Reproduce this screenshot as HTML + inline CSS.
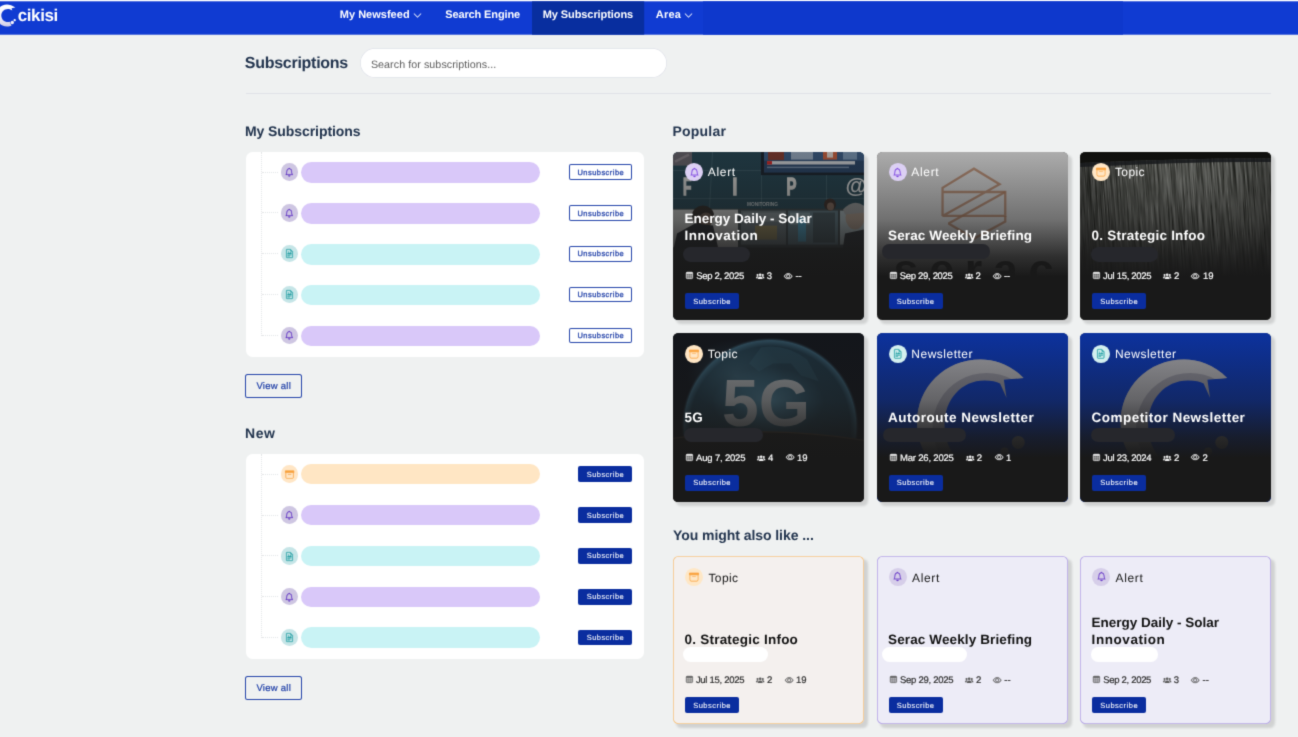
<!DOCTYPE html>
<html lang="en"><head><meta charset="utf-8"><title>Subscriptions</title><style>
*{box-sizing:border-box;margin:0;padding:0}
html,body{width:1298px;height:737px;overflow:hidden;background:#eff1f1}
body{font-family:"Liberation Sans",sans-serif;position:relative}
#wrap{position:absolute;left:-12px;top:-12px;width:1322px;height:761px;background:#eff1f1;filter:url(#soft)}
#root{position:absolute;left:12px;top:12px;width:1298px;height:737px;background:#eff1f1}
.b{position:absolute}
.i{position:absolute;display:block;overflow:visible}
.t{position:absolute;white-space:pre;line-height:1;font-family:"Liberation Sans",sans-serif;text-rendering:geometricPrecision}
.card{border-radius:5.500px;overflow:hidden;background:#191919;box-shadow:3.600px 3.600px 2.400px rgba(0,0,0,.135)}
.card .i{overflow:hidden}
</style></head><body><svg width="0" height="0" style="position:absolute"><defs><filter id="soft" x="0" y="0" width="100%" height="100%" color-interpolation-filters="sRGB"><feConvolveMatrix order="3" kernelMatrix="0.01960 0.10080 0.01960 0.10080 0.51840 0.10080 0.01960 0.10080 0.01960" divisor="1" edgeMode="duplicate" preserveAlpha="true"/></filter></defs></svg><div id="wrap"><div id="root"><svg class="i" style="left:-12px;top:-12px" width="1322" height="52" viewBox="-12 -12 1322 52"><rect x="-12" y="-12" width="1322" height="14" fill="#fff"/><rect x="-12" y="1.300" width="1322" height="33.400" fill="#103bd2"/><rect x="703" y="1.300" width="420" height="33.400" fill="#0e38cc"/><rect x="532" y="1.300" width="112.200" height="33.400" fill="#082e9f"/></svg>
<svg class="i" style="left:0;top:0;width:60px;height:36px" viewBox="0 0 60 36">
<defs><linearGradient id="lg" x1="0" y1="0" x2="0" y2="1"><stop offset="0" stop-color="#ffffff"/><stop offset="0.55" stop-color="#f4f3fb"/><stop offset="1" stop-color="#cfcde6"/></linearGradient></defs>
<path fill="url(#lg)" d="M15.300 7.600 C12.500 5.300 9.500 4.500 7 4.500 C0.500 4.500 -4 9.500 -4 15.500 C-4 21.600 1 26.600 7 26.600 C9 26.600 10.400 26.200 11.600 25.200 C10.600 24 10.200 22.900 10.100 21.800 C9.200 22 8.400 22 7.800 22 C4.200 22 1.300 19.100 1.300 15.400 C1.300 11.800 4.200 8.900 7.800 8.900 C9.200 8.900 10.600 9.300 11.600 10 L12.300 10.800 L11.600 8.300 Z"/>
<circle cx="12.300" cy="22.500" r="1.700" fill="#f2f1fa"/><circle cx="14.700" cy="20.200" r="1.150" fill="#fff"/>
</svg>
<span class="t" style="left:17.70px;top:7.00px;font-size:17px;font-weight:700;color:#fff;letter-spacing:-0.387px;">cikisi</span>
<span class="t" style="left:339.79px;top:10.00px;font-size:11px;font-weight:700;color:#fff;letter-spacing:0.013px;">My Newsfeed</span>
<svg class="i" viewBox="0 0 16 16" style="left:412.70px;top:10.50px;width:9.00px;height:9.00px;fill:#fff;stroke:#fff;stroke-width:0.35"><path fill-rule="evenodd" d="M1.646 4.646a.5.5 0 0 1 .708 0L8 10.293l5.646-5.647a.5.5 0 0 1 .708.708l-6 6a.5.5 0 0 1-.708 0l-6-6a.5.5 0 0 1 0-.708z"/></svg>
<span class="t" style="left:445.19px;top:10.00px;font-size:11px;font-weight:700;color:#fff;letter-spacing:-0.116px;">Search Engine</span>
<span class="t" style="left:542.68px;top:10.00px;font-size:11px;font-weight:700;color:#fff;letter-spacing:-0.077px;">My Subscriptions</span>
<span class="t" style="left:655.78px;top:10.00px;font-size:11px;font-weight:700;color:#fff;letter-spacing:0.220px;">Area</span>
<svg class="i" viewBox="0 0 16 16" style="left:684.00px;top:10.50px;width:9.00px;height:9.00px;fill:#fff;stroke:#fff;stroke-width:0.35"><path fill-rule="evenodd" d="M1.646 4.646a.5.5 0 0 1 .708 0L8 10.293l5.646-5.647a.5.5 0 0 1 .708.708l-6 6a.5.5 0 0 1-.708 0l-6-6a.5.5 0 0 1 0-.708z"/></svg>
<span class="t" style="left:244.76px;top:56.00px;font-size:16px;font-weight:700;color:#22344e;letter-spacing:-0.267px;">Subscriptions</span>
<div class="b" style="left:360.00px;top:48.40px;width:306.80px;height:30.10px;background:#fff;border-radius:15.100px;box-shadow:inset 0 0 0 0.700px #dcdfe6"></div>
<span class="t" style="left:370.90px;top:60.00px;font-size:10.7px;font-weight:400;color:#5c5c5c;letter-spacing:0.070px;">Search for subscriptions...</span>
<div class="b" style="left:245.50px;top:93.00px;width:1025.60px;height:0.90px;background:#e0e2e7"></div>
<span class="t" style="left:244.89px;top:124.00px;font-size:14px;font-weight:700;color:#22344e;letter-spacing:-0.065px;">My Subscriptions</span>
<span class="t" style="left:244.89px;top:426.00px;font-size:14px;font-weight:700;color:#22344e;letter-spacing:0.662px;">New</span>
<span class="t" style="left:672.59px;top:124.00px;font-size:14px;font-weight:700;color:#22344e;letter-spacing:0.199px;">Popular</span>
<span class="t" style="left:672.99px;top:528.00px;font-size:14px;font-weight:700;color:#22344e;letter-spacing:-0.059px;">You might also like ...</span>
<div class="b" style="left:245.50px;top:151.60px;width:398.50px;height:205.00px;background:#fff;border-radius:6.500px"></div><div class="b" style="left:261.20px;top:151.60px;width:0.00px;height:184.00px;border-left:1px dotted #e3e5e7"></div><div class="b" style="left:261.60px;top:171.50px;width:16.40px;height:0.00px;border-top:1px dotted #e3e5e7"></div><div class="b" style="left:280.60px;top:163.30px;width:17.40px;height:17.40px;background:#cec6e2;border-radius:50%"></div><svg class="i" viewBox="0 0 16 16" style="left:285.05px;top:167.85px;width:8.50px;height:8.50px;fill:#5a2cc2;stroke:#5a2cc2;stroke-width:0.45"><path d="M8 16a2 2 0 0 0 2-2H6a2 2 0 0 0 2 2zM8 1.918l-.797.161A4.002 4.002 0 0 0 4 6c0 .628-.134 2.197-.459 3.742-.16.767-.376 1.566-.663 2.258h10.244c-.287-.692-.502-1.490-.663-2.258C12.134 8.197 12 6.628 12 6a4.002 4.002 0 0 0-3.203-3.920L8 1.917zM14.220 12c.223.447.481.801.78 1H1c.299-.199.557-.553.78-1C2.680 10.200 3 6.880 3 6c0-2.420 1.720-4.440 4.005-4.901a1 1 0 1 1 1.990 0A5.002 5.002 0 0 1 13 6c0 .880.320 4.200 1.220 6z"/></svg><div class="b" style="left:300.70px;top:162.00px;width:239.40px;height:20.80px;background:#d9c8f9;border-radius:10.400px"></div><div class="b" style="left:569.00px;top:164.10px;width:63.20px;height:15.70px;box-shadow:inset 0 0 0 1px #2545aa;border-radius:2px;background:#fff"></div><span class="t" style="left:577.51px;top:169.00px;font-size:7.5px;font-weight:400;color:#1c3ca6;letter-spacing:0.449px;-webkit-text-stroke:0.250px #1c3ca6;">Unsubscribe</span><div class="b" style="left:261.60px;top:212.40px;width:16.40px;height:0.00px;border-top:1px dotted #e3e5e7"></div><div class="b" style="left:280.60px;top:204.20px;width:17.40px;height:17.40px;background:#cec6e2;border-radius:50%"></div><svg class="i" viewBox="0 0 16 16" style="left:285.05px;top:208.75px;width:8.50px;height:8.50px;fill:#5a2cc2;stroke:#5a2cc2;stroke-width:0.45"><path d="M8 16a2 2 0 0 0 2-2H6a2 2 0 0 0 2 2zM8 1.918l-.797.161A4.002 4.002 0 0 0 4 6c0 .628-.134 2.197-.459 3.742-.16.767-.376 1.566-.663 2.258h10.244c-.287-.692-.502-1.490-.663-2.258C12.134 8.197 12 6.628 12 6a4.002 4.002 0 0 0-3.203-3.920L8 1.917zM14.220 12c.223.447.481.801.78 1H1c.299-.199.557-.553.78-1C2.680 10.200 3 6.880 3 6c0-2.420 1.720-4.440 4.005-4.901a1 1 0 1 1 1.990 0A5.002 5.002 0 0 1 13 6c0 .880.320 4.200 1.220 6z"/></svg><div class="b" style="left:300.70px;top:202.90px;width:239.40px;height:20.80px;background:#d9c8f9;border-radius:10.400px"></div><div class="b" style="left:569.00px;top:205.00px;width:63.20px;height:15.70px;box-shadow:inset 0 0 0 1px #2545aa;border-radius:2px;background:#fff"></div><span class="t" style="left:577.51px;top:210.00px;font-size:7.5px;font-weight:400;color:#1c3ca6;letter-spacing:0.449px;-webkit-text-stroke:0.250px #1c3ca6;">Unsubscribe</span><div class="b" style="left:261.60px;top:253.30px;width:16.40px;height:0.00px;border-top:1px dotted #e3e5e7"></div><div class="b" style="left:280.60px;top:245.10px;width:17.40px;height:17.40px;background:#c6e5e7;border-radius:50%"></div><svg class="i" viewBox="0 0 16 16" style="left:284.80px;top:249.40px;width:9.00px;height:9.00px;fill:#2aa1a6;stroke:#2aa1a6;stroke-width:0.45"><path d="M14 4.500V14a2 2 0 0 1-2 2H4a2 2 0 0 1-2-2V2a2 2 0 0 1 2-2h5.500L14 4.500zm-3 0A1.500 1.500 0 0 1 9.500 3V1H4a1 1 0 0 0-1 1v12a1 1 0 0 0 1 1h8a1 1 0 0 0 1-1V4.500h-2z"/><path d="M4.500 12.500A.5.500 0 0 1 5 12h3a.5.500 0 0 1 0 1H5a.5.500 0 0 1-.5-.5zm0-2A.5.500 0 0 1 5 10h6a.5.500 0 0 1 0 1H5a.5.500 0 0 1-.5-.5zm1.639-3.708 1.330.886 1.854-1.855a.25.250 0 0 1 .289-.047l1.888.974V8.500a.5.500 0 0 1-.5.500H5a.5.500 0 0 1-.5-.5V8s1.540-1.274 1.639-1.208zM6.250 6a.75.750 0 1 0 0-1.500.75.750 0 0 0 0 1.500z"/></svg><div class="b" style="left:300.70px;top:243.80px;width:239.40px;height:20.80px;background:#c9f3f5;border-radius:10.400px"></div><div class="b" style="left:569.00px;top:245.90px;width:63.20px;height:15.70px;box-shadow:inset 0 0 0 1px #2545aa;border-radius:2px;background:#fff"></div><span class="t" style="left:577.51px;top:250.00px;font-size:7.5px;font-weight:400;color:#1c3ca6;letter-spacing:0.449px;-webkit-text-stroke:0.250px #1c3ca6;">Unsubscribe</span><div class="b" style="left:261.60px;top:294.20px;width:16.40px;height:0.00px;border-top:1px dotted #e3e5e7"></div><div class="b" style="left:280.60px;top:286.00px;width:17.40px;height:17.40px;background:#c6e5e7;border-radius:50%"></div><svg class="i" viewBox="0 0 16 16" style="left:284.80px;top:290.30px;width:9.00px;height:9.00px;fill:#2aa1a6;stroke:#2aa1a6;stroke-width:0.45"><path d="M14 4.500V14a2 2 0 0 1-2 2H4a2 2 0 0 1-2-2V2a2 2 0 0 1 2-2h5.500L14 4.500zm-3 0A1.500 1.500 0 0 1 9.500 3V1H4a1 1 0 0 0-1 1v12a1 1 0 0 0 1 1h8a1 1 0 0 0 1-1V4.500h-2z"/><path d="M4.500 12.500A.5.500 0 0 1 5 12h3a.5.500 0 0 1 0 1H5a.5.500 0 0 1-.5-.5zm0-2A.5.500 0 0 1 5 10h6a.5.500 0 0 1 0 1H5a.5.500 0 0 1-.5-.5zm1.639-3.708 1.330.886 1.854-1.855a.25.250 0 0 1 .289-.047l1.888.974V8.500a.5.500 0 0 1-.5.500H5a.5.500 0 0 1-.5-.5V8s1.540-1.274 1.639-1.208zM6.250 6a.75.750 0 1 0 0-1.500.75.750 0 0 0 0 1.500z"/></svg><div class="b" style="left:300.70px;top:284.70px;width:239.40px;height:20.80px;background:#c9f3f5;border-radius:10.400px"></div><div class="b" style="left:569.00px;top:286.80px;width:63.20px;height:15.70px;box-shadow:inset 0 0 0 1px #2545aa;border-radius:2px;background:#fff"></div><span class="t" style="left:577.51px;top:291.00px;font-size:7.5px;font-weight:400;color:#1c3ca6;letter-spacing:0.449px;-webkit-text-stroke:0.250px #1c3ca6;">Unsubscribe</span><div class="b" style="left:261.60px;top:335.10px;width:16.40px;height:0.00px;border-top:1px dotted #e3e5e7"></div><div class="b" style="left:280.60px;top:326.90px;width:17.40px;height:17.40px;background:#cec6e2;border-radius:50%"></div><svg class="i" viewBox="0 0 16 16" style="left:285.05px;top:331.45px;width:8.50px;height:8.50px;fill:#5a2cc2;stroke:#5a2cc2;stroke-width:0.45"><path d="M8 16a2 2 0 0 0 2-2H6a2 2 0 0 0 2 2zM8 1.918l-.797.161A4.002 4.002 0 0 0 4 6c0 .628-.134 2.197-.459 3.742-.16.767-.376 1.566-.663 2.258h10.244c-.287-.692-.502-1.490-.663-2.258C12.134 8.197 12 6.628 12 6a4.002 4.002 0 0 0-3.203-3.920L8 1.917zM14.220 12c.223.447.481.801.78 1H1c.299-.199.557-.553.78-1C2.680 10.200 3 6.880 3 6c0-2.420 1.720-4.440 4.005-4.901a1 1 0 1 1 1.990 0A5.002 5.002 0 0 1 13 6c0 .880.320 4.200 1.220 6z"/></svg><div class="b" style="left:300.70px;top:325.60px;width:239.40px;height:20.80px;background:#d9c8f9;border-radius:10.400px"></div><div class="b" style="left:569.00px;top:327.70px;width:63.20px;height:15.70px;box-shadow:inset 0 0 0 1px #2545aa;border-radius:2px;background:#fff"></div><span class="t" style="left:577.51px;top:332.00px;font-size:7.5px;font-weight:400;color:#1c3ca6;letter-spacing:0.449px;-webkit-text-stroke:0.250px #1c3ca6;">Unsubscribe</span>
<div class="b" style="left:245.50px;top:453.70px;width:398.50px;height:205.00px;background:#fff;border-radius:6.500px"></div><div class="b" style="left:261.20px;top:453.70px;width:0.00px;height:184.00px;border-left:1px dotted #e3e5e7"></div><div class="b" style="left:261.60px;top:473.60px;width:16.40px;height:0.00px;border-top:1px dotted #e3e5e7"></div><div class="b" style="left:280.60px;top:465.40px;width:17.40px;height:17.40px;background:#ffe6c6;border-radius:50%"></div><svg class="i" viewBox="0 0 16 16" style="left:284.70px;top:469.60px;width:9.20px;height:9.20px;fill:#f9a33e;stroke:#f9a33e;stroke-width:0.25"><rect x="0.500" y="1.500" width="15" height="3" stroke="none"/><path d="M0 2a1 1 0 0 1 1-1h14a1 1 0 0 1 1 1v2a1 1 0 0 1-1 1v7.500a2.500 2.500 0 0 1-2.500 2.500h-9A2.500 2.500 0 0 1 1 12.500V5a1 1 0 0 1-1-1V2zm2 3v7.500A1.500 1.500 0 0 0 3.500 14h9a1.500 1.500 0 0 0 1.500-1.500V5H2zm13-3H1v2h14V2zM5 7.500a.5.500 0 0 1 .5-.5h5a.5.500 0 0 1 0 1h-5a.5.500 0 0 1-.5-.5z"/></svg><div class="b" style="left:300.70px;top:463.80px;width:239.40px;height:20.50px;background:#ffe6c4;border-radius:10.400px"></div><div class="b" style="left:578.20px;top:466.20px;width:54.00px;height:15.70px;background:#0a2d9f;border-radius:2px"></div><span class="t" style="left:586.71px;top:471.00px;font-size:7.5px;font-weight:400;color:#fff;letter-spacing:0.452px;-webkit-text-stroke:0.080px #fff;">Subscribe</span><div class="b" style="left:261.60px;top:514.50px;width:16.40px;height:0.00px;border-top:1px dotted #e3e5e7"></div><div class="b" style="left:280.60px;top:506.30px;width:17.40px;height:17.40px;background:#cec6e2;border-radius:50%"></div><svg class="i" viewBox="0 0 16 16" style="left:285.05px;top:510.85px;width:8.50px;height:8.50px;fill:#5a2cc2;stroke:#5a2cc2;stroke-width:0.45"><path d="M8 16a2 2 0 0 0 2-2H6a2 2 0 0 0 2 2zM8 1.918l-.797.161A4.002 4.002 0 0 0 4 6c0 .628-.134 2.197-.459 3.742-.16.767-.376 1.566-.663 2.258h10.244c-.287-.692-.502-1.490-.663-2.258C12.134 8.197 12 6.628 12 6a4.002 4.002 0 0 0-3.203-3.920L8 1.917zM14.220 12c.223.447.481.801.78 1H1c.299-.199.557-.553.78-1C2.680 10.200 3 6.880 3 6c0-2.420 1.720-4.440 4.005-4.901a1 1 0 1 1 1.990 0A5.002 5.002 0 0 1 13 6c0 .880.320 4.200 1.220 6z"/></svg><div class="b" style="left:300.70px;top:504.70px;width:239.40px;height:20.50px;background:#d9c8f9;border-radius:10.400px"></div><div class="b" style="left:578.20px;top:507.10px;width:54.00px;height:15.70px;background:#0a2d9f;border-radius:2px"></div><span class="t" style="left:586.71px;top:512.00px;font-size:7.5px;font-weight:400;color:#fff;letter-spacing:0.452px;-webkit-text-stroke:0.080px #fff;">Subscribe</span><div class="b" style="left:261.60px;top:555.40px;width:16.40px;height:0.00px;border-top:1px dotted #e3e5e7"></div><div class="b" style="left:280.60px;top:547.20px;width:17.40px;height:17.40px;background:#c6e5e7;border-radius:50%"></div><svg class="i" viewBox="0 0 16 16" style="left:284.80px;top:551.50px;width:9.00px;height:9.00px;fill:#2aa1a6;stroke:#2aa1a6;stroke-width:0.45"><path d="M14 4.500V14a2 2 0 0 1-2 2H4a2 2 0 0 1-2-2V2a2 2 0 0 1 2-2h5.500L14 4.500zm-3 0A1.500 1.500 0 0 1 9.500 3V1H4a1 1 0 0 0-1 1v12a1 1 0 0 0 1 1h8a1 1 0 0 0 1-1V4.500h-2z"/><path d="M4.500 12.500A.5.500 0 0 1 5 12h3a.5.500 0 0 1 0 1H5a.5.500 0 0 1-.5-.5zm0-2A.5.500 0 0 1 5 10h6a.5.500 0 0 1 0 1H5a.5.500 0 0 1-.5-.5zm1.639-3.708 1.330.886 1.854-1.855a.25.250 0 0 1 .289-.047l1.888.974V8.500a.5.500 0 0 1-.5.500H5a.5.500 0 0 1-.5-.5V8s1.540-1.274 1.639-1.208zM6.250 6a.75.750 0 1 0 0-1.500.75.750 0 0 0 0 1.500z"/></svg><div class="b" style="left:300.70px;top:545.60px;width:239.40px;height:20.50px;background:#c9f3f5;border-radius:10.400px"></div><div class="b" style="left:578.20px;top:548.00px;width:54.00px;height:15.70px;background:#0a2d9f;border-radius:2px"></div><span class="t" style="left:586.71px;top:552.00px;font-size:7.5px;font-weight:400;color:#fff;letter-spacing:0.452px;-webkit-text-stroke:0.080px #fff;">Subscribe</span><div class="b" style="left:261.60px;top:596.30px;width:16.40px;height:0.00px;border-top:1px dotted #e3e5e7"></div><div class="b" style="left:280.60px;top:588.10px;width:17.40px;height:17.40px;background:#cec6e2;border-radius:50%"></div><svg class="i" viewBox="0 0 16 16" style="left:285.05px;top:592.65px;width:8.50px;height:8.50px;fill:#5a2cc2;stroke:#5a2cc2;stroke-width:0.45"><path d="M8 16a2 2 0 0 0 2-2H6a2 2 0 0 0 2 2zM8 1.918l-.797.161A4.002 4.002 0 0 0 4 6c0 .628-.134 2.197-.459 3.742-.16.767-.376 1.566-.663 2.258h10.244c-.287-.692-.502-1.490-.663-2.258C12.134 8.197 12 6.628 12 6a4.002 4.002 0 0 0-3.203-3.920L8 1.917zM14.220 12c.223.447.481.801.78 1H1c.299-.199.557-.553.78-1C2.680 10.200 3 6.880 3 6c0-2.420 1.720-4.440 4.005-4.901a1 1 0 1 1 1.990 0A5.002 5.002 0 0 1 13 6c0 .880.320 4.200 1.220 6z"/></svg><div class="b" style="left:300.70px;top:586.50px;width:239.40px;height:20.50px;background:#d9c8f9;border-radius:10.400px"></div><div class="b" style="left:578.20px;top:588.90px;width:54.00px;height:15.70px;background:#0a2d9f;border-radius:2px"></div><span class="t" style="left:586.71px;top:593.00px;font-size:7.5px;font-weight:400;color:#fff;letter-spacing:0.452px;-webkit-text-stroke:0.080px #fff;">Subscribe</span><div class="b" style="left:261.60px;top:637.20px;width:16.40px;height:0.00px;border-top:1px dotted #e3e5e7"></div><div class="b" style="left:280.60px;top:629.00px;width:17.40px;height:17.40px;background:#c6e5e7;border-radius:50%"></div><svg class="i" viewBox="0 0 16 16" style="left:284.80px;top:633.30px;width:9.00px;height:9.00px;fill:#2aa1a6;stroke:#2aa1a6;stroke-width:0.45"><path d="M14 4.500V14a2 2 0 0 1-2 2H4a2 2 0 0 1-2-2V2a2 2 0 0 1 2-2h5.500L14 4.500zm-3 0A1.500 1.500 0 0 1 9.500 3V1H4a1 1 0 0 0-1 1v12a1 1 0 0 0 1 1h8a1 1 0 0 0 1-1V4.500h-2z"/><path d="M4.500 12.500A.5.500 0 0 1 5 12h3a.5.500 0 0 1 0 1H5a.5.500 0 0 1-.5-.5zm0-2A.5.500 0 0 1 5 10h6a.5.500 0 0 1 0 1H5a.5.500 0 0 1-.5-.5zm1.639-3.708 1.330.886 1.854-1.855a.25.250 0 0 1 .289-.047l1.888.974V8.500a.5.500 0 0 1-.5.500H5a.5.500 0 0 1-.5-.5V8s1.540-1.274 1.639-1.208zM6.250 6a.75.750 0 1 0 0-1.500.75.750 0 0 0 0 1.500z"/></svg><div class="b" style="left:300.70px;top:627.40px;width:239.40px;height:20.50px;background:#c9f3f5;border-radius:10.400px"></div><div class="b" style="left:578.20px;top:629.80px;width:54.00px;height:15.70px;background:#0a2d9f;border-radius:2px"></div><span class="t" style="left:586.71px;top:634.00px;font-size:7.5px;font-weight:400;color:#fff;letter-spacing:0.452px;-webkit-text-stroke:0.080px #fff;">Subscribe</span>
<div class="b" style="left:245.20px;top:374.10px;width:56.80px;height:23.90px;box-shadow:inset 0 0 0 1px #2545aa;border-radius:2.500px"></div><span class="t" style="left:256.38px;top:382.00px;font-size:9.5px;font-weight:400;color:#1c3ca6;letter-spacing:0.265px;-webkit-text-stroke:0.200px #1c3ca6;">View all</span>
<div class="b" style="left:245.20px;top:676.10px;width:56.80px;height:23.90px;box-shadow:inset 0 0 0 1px #2545aa;border-radius:2.500px"></div><span class="t" style="left:256.38px;top:684.00px;font-size:9.5px;font-weight:400;color:#1c3ca6;letter-spacing:0.265px;-webkit-text-stroke:0.200px #1c3ca6;">View all</span>
<div class="b card" style="left:673px;top:152px;width:191px;height:168px;"><svg class="i" style="left:-3px;top:-3px" width="197" height="175" viewBox="-3.00 -2.60 197 175">
<rect x="-5" y="-5" width="201" height="179" fill="#204351"/>
<rect x="0" y="0" width="191" height="57" fill="#214554"/>
<path d="M39.500 0 L36.500 57 M88.500 23 V57 M153.500 23 V57 M0 19 H88 M0 47 H191" stroke="#9fc0c8" stroke-opacity=".22" stroke-width="0.900" fill="none"/>
<rect x="0" y="0" width="19" height="14" fill="#6a6670"/><path d="M2 10 L16 3" stroke="#a49aa0" stroke-width="2.500" opacity=".6"/>
<rect x="88" y="0" width="103" height="23.500" fill="#141e2a"/>
<rect x="91" y="0" width="100" height="21" fill="#26456c"/>
<rect x="91" y="0" width="100" height="9" fill="#3a5f8c"/>
<rect x="95" y="0" width="16" height="8.500" fill="#8a3a2e"/><rect x="118" y="0" width="22" height="8" fill="#9fb4cc"/><rect x="150" y="0" width="14" height="8" fill="#d8653f"/><rect x="154" y="0" width="6" height="6" fill="#f0e6e0"/><rect x="170" y="0" width="14" height="8" fill="#7f9fc0"/>
<rect x="94" y="9.500" width="88" height="3.400" fill="#e4e8ec"/><rect x="94" y="9.500" width="5" height="3.400" fill="#e02424"/>
<rect x="94" y="15" width="82" height="1.500" fill="#8ea8c4" opacity=".8"/>
<g font-family="Liberation Sans" font-weight="700" font-size="23" fill="#f2f2ee" stroke="#f2f2ee" stroke-width="1.300"><text transform="translate(10 43) scale(.6 1)">F</text><text transform="translate(59.500 43) scale(.75 1)">I</text><text transform="translate(113.500 43) scale(.65 1)">P</text></g><text x="172.500" y="41.500" font-family="Liberation Sans" font-size="22" font-weight="700" fill="#f4f6f6">@</text>
<text x="74" y="54" font-family="Liberation Sans" font-weight="700" font-size="5.600" fill="#c8d2d4" textLength="31" lengthAdjust="spacingAndGlyphs">MONITORING</text>
<rect x="0" y="57" width="191" height="42" fill="#3a464a"/>
<rect x="0" y="58" width="65" height="38" fill="#d4d6d4"/>
<rect x="68" y="59" width="45" height="34" fill="#6c7a80"/><rect x="70" y="61" width="41" height="9" fill="#8c989c"/>
<rect x="115" y="59" width="50" height="34" fill="#5f7c88"/><rect x="117" y="61" width="20" height="12" fill="#8aa4ac"/><rect x="140" y="61" width="22" height="30" fill="#42565e"/>
<rect x="167" y="59" width="24" height="34" fill="#b4c4c8"/>
<rect x="82" y="74" width="22" height="14" fill="#b89c50" opacity=".7"/>
<rect x="125" y="66" width="8" height="24" fill="#4db0d8"/>
<ellipse cx="30" cy="64" rx="11" ry="10" fill="#2a2622"/><ellipse cx="33" cy="68" rx="7" ry="7" fill="#6a584c"/><path d="M0 100 L4 82 L22 72 L40 74 L46 100 Z" fill="#20242a"/>
<ellipse cx="182" cy="66" rx="9.500" ry="12" fill="#b9a493"/><path d="M170 58 Q181 46 192 55 L192 61 L172 63 Z" fill="#a6a8a8"/><path d="M168 110 L172 82 L191 78 L191 110 Z" fill="#262a30"/>
<ellipse cx="157" cy="53" rx="6" ry="6" fill="#3a2a24"/><ellipse cx="157.500" cy="55" rx="3.500" ry="4" fill="#8a6e5e"/>
<rect x="0" y="96" width="191" height="73" fill="#242a2c"/>
</svg><div class="b" style="left:-3px;top:-3.40px;right:-3px;bottom:-3px;background:linear-gradient(to bottom, rgba(25,25,25,0.36) 0px, rgba(25,25,25,0.36) 3.00px, rgba(25,25,25,0.62) 70.32px, rgba(25,25,25,0.9) 107.35px, rgba(25,25,25,1.0) 127.54px)"></div></div>
<div class="b" style="left:685.10px;top:163.05px;width:17.90px;height:17.90px;background:#dcd0f4;border-radius:50%"></div><svg class="i" viewBox="0 0 16 16" style="left:689.55px;top:167.50px;width:9.00px;height:9.00px;fill:#7a3fe0;stroke:#7a3fe0;stroke-width:0.45"><path d="M8 16a2 2 0 0 0 2-2H6a2 2 0 0 0 2 2zM8 1.918l-.797.161A4.002 4.002 0 0 0 4 6c0 .628-.134 2.197-.459 3.742-.16.767-.376 1.566-.663 2.258h10.244c-.287-.692-.502-1.490-.663-2.258C12.134 8.197 12 6.628 12 6a4.002 4.002 0 0 0-3.203-3.920L8 1.917zM14.220 12c.223.447.481.801.78 1H1c.299-.199.557-.553.78-1C2.680 10.200 3 6.880 3 6c0-2.420 1.720-4.440 4.005-4.901a1 1 0 1 1 1.990 0A5.002 5.002 0 0 1 13 6c0 .880.320 4.200 1.220 6z"/></svg><span class="t" style="left:707.82px;top:166.00px;font-size:12px;font-weight:400;color:#fff;letter-spacing:0.668px;">Alert</span><span class="t" style="left:684.52px;top:212.00px;font-size:13.5px;font-weight:700;color:#fff;letter-spacing:-0.010px;">Energy Daily - Solar</span><span class="t" style="left:684.52px;top:229.00px;font-size:13.5px;font-weight:700;color:#fff;letter-spacing:0.556px;">Innovation</span><div class="b" style="left:683.10px;top:247.20px;width:67.30px;height:14.80px;background:#26272c;border-radius:7.40px"></div><svg class="i" viewBox="0 0 16 16" style="left:685.95px;top:272.05px;width:6.90px;height:6.90px;fill:#f2f2f2;stroke:#f2f2f2;stroke-width:1.6"><rect x="0.6" y="0.6" width="14.8" height="14.8" rx="2.2" fill-opacity=".38" stroke-width="1.6"/><rect x="0.6" y="0.6" width="14.8" height="3.6" rx="1.5" stroke="none"/><path d="M5.600 4v11.500M10.400 4v11.500M0.600 8.200h14.800M0.600 11.800h14.800" stroke-width="1" stroke-opacity=".55" fill="none"/></svg><span class="t" style="left:696.18px;top:272.00px;font-size:9.5px;font-weight:400;color:#fff;letter-spacing:-0.312px;-webkit-text-stroke:0.180px #fff;">Sep 2, 2025</span><svg class="i" viewBox="0 0 20 14" style="left:755.80px;top:272.75px;width:8.40px;height:5.90px;fill:#f2f2f2;stroke:#f2f2f2;stroke-width:0.2"><circle cx="10" cy="4" r="3.100"/><path d="M4.200 14c0-3.600 2.500-5.700 5.800-5.700s5.800 2.100 5.800 5.700z"/><circle cx="3.700" cy="4.700" r="2.400"/><circle cx="16.300" cy="4.700" r="2.400"/><path d="M0 12.500c0-2.800 1.500-4.700 3.900-4.700.8 0 1.500.2 2 .6-1.400 1-2.300 2.400-2.500 4.100z"/><path d="M20 12.500c0-2.800-1.500-4.700-3.900-4.700-.8 0-1.500.2-2 .6 1.400 1 2.300 2.400 2.500 4.100z"/></svg><span class="t" style="left:766.68px;top:272.00px;font-size:9.5px;font-weight:400;color:#fff;letter-spacing:0.000px;-webkit-text-stroke:0.180px #fff;">3</span><svg class="i" viewBox="0 0 16 16" style="left:784.20px;top:271.50px;width:8.40px;height:8.40px;fill:#f2f2f2;stroke:#f2f2f2;stroke-width:0.55"><path d="M16 8s-3-5.500-8-5.500S0 8 0 8s3 5.500 8 5.500S16 8 16 8zM1.173 8a13.133 13.133 0 0 1 1.660-2.043C4.120 4.668 5.880 3.500 8 3.500c2.120 0 3.879 1.168 5.168 2.457A13.133 13.133 0 0 1 14.828 8c-.58.087-.122.183-.195.288-.335.480-.830 1.120-1.465 1.755C11.879 11.332 10.119 12.500 8 12.500c-2.120 0-3.879-1.168-5.168-2.457A13.134 13.134 0 0 1 1.172 8z"/><path d="M8 5.500a2.500 2.500 0 1 0 0 5 2.500 2.500 0 0 0 0-5zM4.500 8a3.500 3.500 0 1 1 7 0 3.500 3.500 0 0 1-7 0z"/></svg><span class="t" style="left:795.38px;top:272.00px;font-size:9.5px;font-weight:400;color:#fff;letter-spacing:0.000px;-webkit-text-stroke:0.180px #fff;">--</span><div class="b" style="left:685.20px;top:293.00px;width:53.80px;height:15.80px;background:#0a2d9f;border-radius:2px"></div><span class="t" style="left:693.21px;top:298.00px;font-size:7.5px;font-weight:400;color:#fff;letter-spacing:0.489px;-webkit-text-stroke:0.080px #fff;">Subscribe</span>
<div class="b card" style="left:877px;top:152px;width:191px;height:168px;"><svg class="i" style="left:-3px;top:-3px" width="197" height="175" viewBox="-2.55 -2.60 197 175">
<rect x="-5" y="-5" width="201" height="179" fill="#ffffff"/>
<g fill="none" stroke="#d0906a" stroke-opacity=".8" stroke-width="2.300" stroke-linejoin="miter" stroke-miterlimit="2">
<path d="M66 64.300 V36.200 L97.400 17.100 L123 32.600 L66 64.300 H128.700 V40.400 H66"/>
<path d="M128.700 40.400 L72 72 L97.500 87 L128.700 70 V64.300"/>
</g>
<text x="17" y="133.500" font-family="Liberation Sans" font-weight="700" font-size="45" fill="#141414" textLength="160" lengthAdjust="spacing">serac</text>
</svg><div class="b" style="left:-3px;top:-3.40px;right:-3px;bottom:-3px;background:linear-gradient(to bottom, rgba(25,25,25,0.36) 0px, rgba(25,25,25,0.36) 3.00px, rgba(25,25,25,0.62) 70.32px, rgba(25,25,25,0.9) 107.35px, rgba(25,25,25,1.0) 127.54px)"></div></div>
<div class="b" style="left:888.65px;top:163.05px;width:17.90px;height:17.90px;background:#dcd0f4;border-radius:50%"></div><svg class="i" viewBox="0 0 16 16" style="left:893.10px;top:167.50px;width:9.00px;height:9.00px;fill:#7a3fe0;stroke:#7a3fe0;stroke-width:0.45"><path d="M8 16a2 2 0 0 0 2-2H6a2 2 0 0 0 2 2zM8 1.918l-.797.161A4.002 4.002 0 0 0 4 6c0 .628-.134 2.197-.459 3.742-.16.767-.376 1.566-.663 2.258h10.244c-.287-.692-.502-1.490-.663-2.258C12.134 8.197 12 6.628 12 6a4.002 4.002 0 0 0-3.203-3.920L8 1.917zM14.220 12c.223.447.481.801.78 1H1c.299-.199.557-.553.78-1C2.680 10.200 3 6.880 3 6c0-2.420 1.720-4.440 4.005-4.901a1 1 0 1 1 1.990 0A5.002 5.002 0 0 1 13 6c0 .880.320 4.200 1.220 6z"/></svg><span class="t" style="left:911.37px;top:166.00px;font-size:12px;font-weight:400;color:#fff;letter-spacing:0.668px;">Alert</span><span class="t" style="left:888.07px;top:229.00px;font-size:13.5px;font-weight:700;color:#fff;letter-spacing:0.119px;">Serac Weekly Briefing</span><div class="b" style="left:882.05px;top:244.20px;width:108.00px;height:14.50px;background:#26272c;border-radius:7.25px"></div><svg class="i" viewBox="0 0 16 16" style="left:889.90px;top:272.05px;width:6.90px;height:6.90px;fill:#f2f2f2;stroke:#f2f2f2;stroke-width:1.6"><rect x="0.6" y="0.6" width="14.8" height="14.8" rx="2.2" fill-opacity=".38" stroke-width="1.6"/><rect x="0.6" y="0.6" width="14.8" height="3.6" rx="1.5" stroke="none"/><path d="M5.600 4v11.500M10.400 4v11.500M0.600 8.200h14.800M0.600 11.800h14.800" stroke-width="1" stroke-opacity=".55" fill="none"/></svg><span class="t" style="left:899.73px;top:272.00px;font-size:9.5px;font-weight:400;color:#fff;letter-spacing:-0.309px;-webkit-text-stroke:0.180px #fff;">Sep 29, 2025</span><svg class="i" viewBox="0 0 20 14" style="left:964.75px;top:272.75px;width:8.40px;height:5.90px;fill:#f2f2f2;stroke:#f2f2f2;stroke-width:0.2"><circle cx="10" cy="4" r="3.100"/><path d="M4.200 14c0-3.600 2.500-5.700 5.800-5.700s5.800 2.100 5.800 5.700z"/><circle cx="3.700" cy="4.700" r="2.400"/><circle cx="16.300" cy="4.700" r="2.400"/><path d="M0 12.500c0-2.800 1.500-4.700 3.900-4.700.8 0 1.500.2 2 .6-1.400 1-2.300 2.400-2.500 4.100z"/><path d="M20 12.500c0-2.800-1.500-4.700-3.900-4.700-.8 0-1.500.2-2 .6 1.400 1 2.300 2.400 2.500 4.100z"/></svg><span class="t" style="left:975.43px;top:272.00px;font-size:9.5px;font-weight:400;color:#fff;letter-spacing:0.000px;-webkit-text-stroke:0.180px #fff;">2</span><svg class="i" viewBox="0 0 16 16" style="left:992.85px;top:271.50px;width:8.40px;height:8.40px;fill:#f2f2f2;stroke:#f2f2f2;stroke-width:0.55"><path d="M16 8s-3-5.500-8-5.500S0 8 0 8s3 5.500 8 5.500S16 8 16 8zM1.173 8a13.133 13.133 0 0 1 1.660-2.043C4.120 4.668 5.880 3.500 8 3.500c2.120 0 3.879 1.168 5.168 2.457A13.133 13.133 0 0 1 14.828 8c-.58.087-.122.183-.195.288-.335.480-.830 1.120-1.465 1.755C11.879 11.332 10.119 12.500 8 12.500c-2.120 0-3.879-1.168-5.168-2.457A13.134 13.134 0 0 1 1.172 8z"/><path d="M8 5.500a2.500 2.500 0 1 0 0 5 2.500 2.500 0 0 0 0-5zM4.500 8a3.500 3.500 0 1 1 7 0 3.500 3.500 0 0 1-7 0z"/></svg><span class="t" style="left:1003.93px;top:272.00px;font-size:9.5px;font-weight:400;color:#fff;letter-spacing:0.000px;-webkit-text-stroke:0.180px #fff;">--</span><div class="b" style="left:888.75px;top:293.00px;width:53.80px;height:15.80px;background:#0a2d9f;border-radius:2px"></div><span class="t" style="left:896.76px;top:298.00px;font-size:7.5px;font-weight:400;color:#fff;letter-spacing:0.489px;-webkit-text-stroke:0.080px #fff;">Subscribe</span>
<div class="b card" style="left:1080px;top:152px;width:191px;height:168px;"><svg class="i" style="left:-3px;top:-3px" width="197" height="175" viewBox="-3.10 -2.60 197 175">
<defs><filter id="fib" x="0" y="0" width="100%" height="100%" color-interpolation-filters="sRGB"><feTurbulence type="fractalNoise" baseFrequency="0.7 0.02" numOctaves="3" seed="7" result="n"/><feColorMatrix type="matrix" values="1.050 0 0 0 -0.115  1.050 0 0 0 -0.105  1.050 0 0 0 -0.135  0 0 0 0 1"/></filter>
<radialGradient id="fh" cx="0.6" cy="0.33" r="0.55"><stop offset="0" stop-color="#fff" stop-opacity=".10"/><stop offset="1" stop-color="#fff" stop-opacity="0"/></radialGradient>
<linearGradient id="fe" x1="0" y1="0" x2="1" y2="0"><stop offset="0" stop-color="#000" stop-opacity=".32"/><stop offset=".3" stop-color="#000" stop-opacity="0"/><stop offset=".8" stop-color="#000" stop-opacity="0"/><stop offset="1" stop-color="#000" stop-opacity=".25"/></linearGradient></defs>
<rect x="-5" y="-5" width="201" height="179" fill="#777"/>
<g transform="rotate(-4 95 0)"><rect x="-30" y="-20" width="260" height="220" filter="url(#fib)"/></g>
<rect width="191" height="169" fill="url(#fh)"/><rect width="191" height="169" fill="url(#fe)"/>
<path d="M0 0 H191 V7 Q120 6 0 11.500 Z" fill="#0a0b07"/><path d="M0 11.500 Q120 6 191 7 V10.500 Q120 9.500 0 15.500 Z" fill="#14181c" opacity=".85"/></svg><div class="b" style="left:-3px;top:-3.40px;right:-3px;bottom:-3px;background:linear-gradient(to bottom, rgba(25,25,25,0.36) 0px, rgba(25,25,25,0.36) 3.00px, rgba(25,25,25,0.62) 70.32px, rgba(25,25,25,0.9) 107.35px, rgba(25,25,25,1.0) 127.54px)"></div></div>
<div class="b" style="left:1092.20px;top:163.05px;width:17.90px;height:17.90px;background:#ffe6c5;border-radius:50%"></div><svg class="i" viewBox="0 0 16 16" style="left:1096.15px;top:167.00px;width:10.00px;height:10.00px;fill:#fba540;stroke:#fba540;stroke-width:0.1"><rect x="0.500" y="1.500" width="15" height="3" stroke="none"/><path d="M0 2a1 1 0 0 1 1-1h14a1 1 0 0 1 1 1v2a1 1 0 0 1-1 1v7.500a2.500 2.500 0 0 1-2.500 2.500h-9A2.500 2.500 0 0 1 1 12.500V5a1 1 0 0 1-1-1V2zm2 3v7.500A1.500 1.500 0 0 0 3.500 14h9a1.500 1.500 0 0 0 1.500-1.500V5H2zm13-3H1v2h14V2zM5 7.500a.5.500 0 0 1 .5-.5h5a.5.500 0 0 1 0 1h-5a.5.500 0 0 1-.5-.5z"/></svg><span class="t" style="left:1114.92px;top:166.00px;font-size:12px;font-weight:400;color:#fff;letter-spacing:0.411px;">Topic</span><span class="t" style="left:1091.62px;top:229.00px;font-size:13.5px;font-weight:700;color:#fff;letter-spacing:0.231px;">0. Strategic Infoo</span><div class="b" style="left:1091.10px;top:247.10px;width:66.50px;height:14.70px;background:#26272c;border-radius:7.35px"></div><svg class="i" viewBox="0 0 16 16" style="left:1092.85px;top:272.05px;width:6.90px;height:6.90px;fill:#f2f2f2;stroke:#f2f2f2;stroke-width:1.6"><rect x="0.6" y="0.6" width="14.8" height="14.8" rx="2.2" fill-opacity=".38" stroke-width="1.6"/><rect x="0.6" y="0.6" width="14.8" height="3.6" rx="1.5" stroke="none"/><path d="M5.600 4v11.500M10.400 4v11.500M0.600 8.200h14.800M0.600 11.800h14.800" stroke-width="1" stroke-opacity=".55" fill="none"/></svg><span class="t" style="left:1103.08px;top:272.00px;font-size:9.5px;font-weight:400;color:#fff;letter-spacing:-0.294px;-webkit-text-stroke:0.180px #fff;">Jul 15, 2025</span><svg class="i" viewBox="0 0 20 14" style="left:1162.90px;top:272.75px;width:8.40px;height:5.90px;fill:#f2f2f2;stroke:#f2f2f2;stroke-width:0.2"><circle cx="10" cy="4" r="3.100"/><path d="M4.200 14c0-3.600 2.500-5.700 5.800-5.700s5.800 2.100 5.800 5.700z"/><circle cx="3.700" cy="4.700" r="2.400"/><circle cx="16.300" cy="4.700" r="2.400"/><path d="M0 12.500c0-2.800 1.500-4.700 3.900-4.700.8 0 1.500.2 2 .6-1.400 1-2.300 2.400-2.500 4.100z"/><path d="M20 12.500c0-2.800-1.500-4.700-3.900-4.700-.8 0-1.500.2-2 .6 1.400 1 2.300 2.400 2.500 4.100z"/></svg><span class="t" style="left:1174.08px;top:272.00px;font-size:9.5px;font-weight:400;color:#fff;letter-spacing:0.000px;-webkit-text-stroke:0.180px #fff;">2</span><svg class="i" viewBox="0 0 16 16" style="left:1191.40px;top:271.50px;width:8.40px;height:8.40px;fill:#f2f2f2;stroke:#f2f2f2;stroke-width:0.55"><path d="M16 8s-3-5.500-8-5.500S0 8 0 8s3 5.500 8 5.500S16 8 16 8zM1.173 8a13.133 13.133 0 0 1 1.660-2.043C4.120 4.668 5.880 3.500 8 3.500c2.120 0 3.879 1.168 5.168 2.457A13.133 13.133 0 0 1 14.828 8c-.58.087-.122.183-.195.288-.335.480-.830 1.120-1.465 1.755C11.879 11.332 10.119 12.500 8 12.500c-2.120 0-3.879-1.168-5.168-2.457A13.134 13.134 0 0 1 1.172 8z"/><path d="M8 5.500a2.500 2.500 0 1 0 0 5 2.500 2.500 0 0 0 0-5zM4.500 8a3.500 3.500 0 1 1 7 0 3.500 3.500 0 0 1-7 0z"/></svg><span class="t" style="left:1203.08px;top:272.00px;font-size:9.5px;font-weight:400;color:#fff;letter-spacing:0.000px;-webkit-text-stroke:0.180px #fff;">19</span><div class="b" style="left:1092.30px;top:293.00px;width:53.80px;height:15.80px;background:#0a2d9f;border-radius:2px"></div><span class="t" style="left:1100.31px;top:298.00px;font-size:7.5px;font-weight:400;color:#fff;letter-spacing:0.489px;-webkit-text-stroke:0.080px #fff;">Subscribe</span>
<div class="b card" style="left:673px;top:333px;width:191px;height:169px;"><svg class="i" style="left:-3px;top:-3px" width="197" height="175" viewBox="-3.00 -3.40 197 175">
<defs><radialGradient id="gl" cx="50%" cy="50%" r="50%"><stop offset="0" stop-color="#2b4f63"/><stop offset="0.6" stop-color="#223f50"/><stop offset="0.9" stop-color="#1e3a4b"/><stop offset="0.965" stop-color="#39657d"/><stop offset="1" stop-color="#141a24" stop-opacity="0"/></radialGradient>
<radialGradient id="gl2" cx="50%" cy="50%" r="50%"><stop offset="0" stop-color="#7cc4e4" stop-opacity=".55"/><stop offset="0.6" stop-color="#5aa6c8" stop-opacity=".25"/><stop offset="1" stop-color="#5aa6c8" stop-opacity="0"/></radialGradient></defs>
<rect x="-5" y="-5" width="201" height="179" fill="#10141c"/>
<circle cx="97" cy="93" r="89" fill="url(#gl)"/>
<path d="M88 14 Q112 10 134 26 L146 48 L128 42 L118 30 L100 30 L86 38 L76 30 Z" fill="#3d6f86" opacity=".28"/>
<ellipse cx="95" cy="68" rx="56" ry="34" fill="url(#gl2)"/><ellipse cx="62" cy="42" rx="48" ry="36" fill="url(#gl2)" opacity=".45"/>
<text x="49" y="92.800" font-family="Liberation Sans" font-weight="700" font-size="66" fill="#c2c7cb">5G</text>
<path d="M0 105 Q96 91 191 107 V169 H0 Z" fill="#26241f"/>
<path d="M0 105 Q96 91 191 107" stroke="#6a5640" stroke-width="1.200" fill="none"/>
</svg><div class="b" style="left:-3px;top:-2.60px;right:-3px;bottom:-3px;background:linear-gradient(to bottom, rgba(25,25,25,0.36) 0px, rgba(25,25,25,0.36) 3.00px, rgba(25,25,25,0.62) 70.32px, rgba(25,25,25,0.9) 107.35px, rgba(25,25,25,1.0) 127.54px)"></div></div>
<div class="b" style="left:685.10px;top:344.85px;width:17.90px;height:17.90px;background:#ffe6c5;border-radius:50%"></div><svg class="i" viewBox="0 0 16 16" style="left:689.05px;top:348.80px;width:10.00px;height:10.00px;fill:#fba540;stroke:#fba540;stroke-width:0.1"><rect x="0.500" y="1.500" width="15" height="3" stroke="none"/><path d="M0 2a1 1 0 0 1 1-1h14a1 1 0 0 1 1 1v2a1 1 0 0 1-1 1v7.500a2.500 2.500 0 0 1-2.500 2.500h-9A2.500 2.500 0 0 1 1 12.500V5a1 1 0 0 1-1-1V2zm2 3v7.500A1.500 1.500 0 0 0 3.500 14h9a1.500 1.500 0 0 0 1.500-1.500V5H2zm13-3H1v2h14V2zM5 7.500a.5.500 0 0 1 .5-.5h5a.5.500 0 0 1 0 1h-5a.5.500 0 0 1-.5-.5z"/></svg><span class="t" style="left:707.82px;top:348.00px;font-size:12px;font-weight:400;color:#fff;letter-spacing:0.411px;">Topic</span><span class="t" style="left:684.52px;top:411.00px;font-size:13.5px;font-weight:700;color:#fff;letter-spacing:0.339px;">5G</span><div class="b" style="left:683.60px;top:427.50px;width:79.20px;height:14.50px;background:#26272c;border-radius:7.25px"></div><svg class="i" viewBox="0 0 16 16" style="left:685.95px;top:453.85px;width:6.90px;height:6.90px;fill:#f2f2f2;stroke:#f2f2f2;stroke-width:1.6"><rect x="0.6" y="0.6" width="14.8" height="14.8" rx="2.2" fill-opacity=".38" stroke-width="1.6"/><rect x="0.6" y="0.6" width="14.8" height="3.6" rx="1.5" stroke="none"/><path d="M5.600 4v11.500M10.400 4v11.500M0.600 8.200h14.800M0.600 11.800h14.800" stroke-width="1" stroke-opacity=".55" fill="none"/></svg><span class="t" style="left:696.08px;top:454.00px;font-size:9.5px;font-weight:400;color:#fff;letter-spacing:-0.181px;-webkit-text-stroke:0.180px #fff;">Aug 7, 2025</span><svg class="i" viewBox="0 0 20 14" style="left:757.30px;top:454.55px;width:8.40px;height:5.90px;fill:#f2f2f2;stroke:#f2f2f2;stroke-width:0.2"><circle cx="10" cy="4" r="3.100"/><path d="M4.200 14c0-3.600 2.500-5.700 5.800-5.700s5.800 2.100 5.800 5.700z"/><circle cx="3.700" cy="4.700" r="2.400"/><circle cx="16.300" cy="4.700" r="2.400"/><path d="M0 12.500c0-2.800 1.500-4.700 3.900-4.700.8 0 1.500.2 2 .6-1.400 1-2.300 2.400-2.500 4.100z"/><path d="M20 12.500c0-2.800-1.500-4.700-3.900-4.700-.8 0-1.500.2-2 .6 1.400 1 2.300 2.400 2.500 4.100z"/></svg><span class="t" style="left:768.08px;top:454.00px;font-size:9.5px;font-weight:400;color:#fff;letter-spacing:0.000px;-webkit-text-stroke:0.180px #fff;">4</span><svg class="i" viewBox="0 0 16 16" style="left:785.80px;top:453.30px;width:8.40px;height:8.40px;fill:#f2f2f2;stroke:#f2f2f2;stroke-width:0.55"><path d="M16 8s-3-5.500-8-5.500S0 8 0 8s3 5.500 8 5.500S16 8 16 8zM1.173 8a13.133 13.133 0 0 1 1.660-2.043C4.120 4.668 5.880 3.500 8 3.500c2.120 0 3.879 1.168 5.168 2.457A13.133 13.133 0 0 1 14.828 8c-.58.087-.122.183-.195.288-.335.480-.830 1.120-1.465 1.755C11.879 11.332 10.119 12.500 8 12.500c-2.120 0-3.879-1.168-5.168-2.457A13.134 13.134 0 0 1 1.172 8z"/><path d="M8 5.500a2.500 2.500 0 1 0 0 5 2.500 2.500 0 0 0 0-5zM4.500 8a3.500 3.500 0 1 1 7 0 3.500 3.500 0 0 1-7 0z"/></svg><span class="t" style="left:796.98px;top:454.00px;font-size:9.5px;font-weight:400;color:#fff;letter-spacing:0.000px;-webkit-text-stroke:0.180px #fff;">19</span><div class="b" style="left:685.20px;top:474.80px;width:53.80px;height:15.80px;background:#0a2d9f;border-radius:2px"></div><span class="t" style="left:693.21px;top:479.00px;font-size:7.5px;font-weight:400;color:#fff;letter-spacing:0.489px;-webkit-text-stroke:0.080px #fff;">Subscribe</span>
<div class="b card" style="left:877px;top:333px;width:191px;height:169px;"><svg class="i" style="left:-3px;top:-3px" width="197" height="175" viewBox="-2.55 -3.40 197 175">
<defs><clipPath id="oc"><path clip-rule="evenodd" d="M-50 -50H250V250H-50Z M110 39.500a54 54 0 1 0 0.010 0Z"/></clipPath></defs>
<rect x="-5" y="-5" width="201" height="179" fill="#0540e8"/>
<path id="cp" fill="#b2b2c2" d="M147 44.500 C134 31 118 26 104 26 C68 26 40 54 40.500 90 C41 126 70 150 104 150 C116 150 126 147 134 142 L124 128 C118 132 112 134.500 104 134.500 C81 134.500 68 114 68 91 C68 66 85 47 108 47 C115 47 120 48 123.500 50 L130 64.500 L127.300 46.300 Z"/>
<path fill="#dedee6" clip-path="url(#oc)" d="M147 44.500 C134 31 118 26 104 26 C68 26 40 54 40.500 90 C41 126 70 150 104 150 C116 150 126 147 134 142 L124 128 C118 132 112 134.500 104 134.500 C81 134.500 68 114 68 91 C68 66 85 47 108 47 C115 47 120 48 123.500 50 L130 64.500 L127.300 46.300 Z"/>
<circle cx="141.700" cy="109" r="6.500" fill="#b8b8be"/><circle cx="128" cy="118" r="4" fill="#b8b8be"/>
</svg><div class="b" style="left:-3px;top:-2.60px;right:-3px;bottom:-3px;background:linear-gradient(to bottom, rgba(25,25,25,0.36) 0px, rgba(25,25,25,0.36) 3.00px, rgba(25,25,25,0.62) 70.32px, rgba(25,25,25,0.9) 107.35px, rgba(25,25,25,1.0) 127.54px)"></div></div>
<div class="b" style="left:888.65px;top:344.85px;width:17.90px;height:17.90px;background:#d3efef;border-radius:50%"></div><svg class="i" viewBox="0 0 16 16" style="left:892.85px;top:349.05px;width:9.50px;height:9.50px;fill:#2aa5a8;stroke:#2aa5a8;stroke-width:0.45"><path d="M14 4.500V14a2 2 0 0 1-2 2H4a2 2 0 0 1-2-2V2a2 2 0 0 1 2-2h5.500L14 4.500zm-3 0A1.500 1.500 0 0 1 9.500 3V1H4a1 1 0 0 0-1 1v12a1 1 0 0 0 1 1h8a1 1 0 0 0 1-1V4.500h-2z"/><path d="M4.500 12.500A.5.500 0 0 1 5 12h3a.5.500 0 0 1 0 1H5a.5.500 0 0 1-.5-.5zm0-2A.5.500 0 0 1 5 10h6a.5.500 0 0 1 0 1H5a.5.500 0 0 1-.5-.5zm1.639-3.708 1.330.886 1.854-1.855a.25.250 0 0 1 .289-.047l1.888.974V8.500a.5.500 0 0 1-.5.500H5a.5.500 0 0 1-.5-.5V8s1.540-1.274 1.639-1.208zM6.250 6a.75.750 0 1 0 0-1.500.75.750 0 0 0 0 1.500z"/></svg><span class="t" style="left:911.37px;top:348.00px;font-size:12px;font-weight:400;color:#fff;letter-spacing:0.497px;">Newsletter</span><span class="t" style="left:888.07px;top:411.00px;font-size:13.5px;font-weight:700;color:#fff;letter-spacing:0.485px;">Autoroute Newsletter</span><div class="b" style="left:882.55px;top:427.80px;width:83.70px;height:14.20px;background:#26272c;border-radius:7.10px"></div><svg class="i" viewBox="0 0 16 16" style="left:889.90px;top:453.85px;width:6.90px;height:6.90px;fill:#f2f2f2;stroke:#f2f2f2;stroke-width:1.6"><rect x="0.6" y="0.6" width="14.8" height="14.8" rx="2.2" fill-opacity=".38" stroke-width="1.6"/><rect x="0.6" y="0.6" width="14.8" height="3.6" rx="1.5" stroke="none"/><path d="M5.600 4v11.500M10.400 4v11.500M0.600 8.200h14.800M0.600 11.800h14.800" stroke-width="1" stroke-opacity=".55" fill="none"/></svg><span class="t" style="left:900.03px;top:454.00px;font-size:9.5px;font-weight:400;color:#fff;letter-spacing:-0.195px;-webkit-text-stroke:0.180px #fff;">Mar 26, 2025</span><svg class="i" viewBox="0 0 20 14" style="left:966.05px;top:454.55px;width:8.40px;height:5.90px;fill:#f2f2f2;stroke:#f2f2f2;stroke-width:0.2"><circle cx="10" cy="4" r="3.100"/><path d="M4.200 14c0-3.600 2.500-5.700 5.800-5.700s5.800 2.100 5.800 5.700z"/><circle cx="3.700" cy="4.700" r="2.400"/><circle cx="16.300" cy="4.700" r="2.400"/><path d="M0 12.500c0-2.800 1.500-4.700 3.900-4.700.8 0 1.500.2 2 .6-1.400 1-2.300 2.400-2.500 4.100z"/><path d="M20 12.500c0-2.800-1.500-4.700-3.900-4.700-.8 0-1.500.2-2 .6 1.400 1 2.300 2.400 2.500 4.100z"/></svg><span class="t" style="left:976.83px;top:454.00px;font-size:9.5px;font-weight:400;color:#fff;letter-spacing:0.000px;-webkit-text-stroke:0.180px #fff;">2</span><svg class="i" viewBox="0 0 16 16" style="left:994.55px;top:453.30px;width:8.40px;height:8.40px;fill:#f2f2f2;stroke:#f2f2f2;stroke-width:0.55"><path d="M16 8s-3-5.500-8-5.500S0 8 0 8s3 5.500 8 5.500S16 8 16 8zM1.173 8a13.133 13.133 0 0 1 1.660-2.043C4.120 4.668 5.880 3.500 8 3.500c2.120 0 3.879 1.168 5.168 2.457A13.133 13.133 0 0 1 14.828 8c-.58.087-.122.183-.195.288-.335.480-.830 1.120-1.465 1.755C11.879 11.332 10.119 12.500 8 12.500c-2.120 0-3.879-1.168-5.168-2.457A13.134 13.134 0 0 1 1.172 8z"/><path d="M8 5.500a2.500 2.500 0 1 0 0 5 2.500 2.500 0 0 0 0-5zM4.500 8a3.500 3.500 0 1 1 7 0 3.500 3.500 0 0 1-7 0z"/></svg><span class="t" style="left:1005.93px;top:454.00px;font-size:9.5px;font-weight:400;color:#fff;letter-spacing:0.000px;-webkit-text-stroke:0.180px #fff;">1</span><div class="b" style="left:888.75px;top:474.80px;width:53.80px;height:15.80px;background:#0a2d9f;border-radius:2px"></div><span class="t" style="left:896.76px;top:479.00px;font-size:7.5px;font-weight:400;color:#fff;letter-spacing:0.489px;-webkit-text-stroke:0.080px #fff;">Subscribe</span>
<div class="b card" style="left:1080px;top:333px;width:191px;height:169px;"><svg class="i" style="left:-3px;top:-3px" width="197" height="175" viewBox="-3.10 -3.40 197 175">
<defs><clipPath id="boc"><path clip-rule="evenodd" d="M-50 -50H250V250H-50Z M110 39.500a54 54 0 1 0 0.010 0Z"/></clipPath></defs>
<rect x="-5" y="-5" width="201" height="179" fill="#0540e8"/>
<path id="bcp" fill="#b2b2c2" d="M147 44.500 C134 31 118 26 104 26 C68 26 40 54 40.500 90 C41 126 70 150 104 150 C116 150 126 147 134 142 L124 128 C118 132 112 134.500 104 134.500 C81 134.500 68 114 68 91 C68 66 85 47 108 47 C115 47 120 48 123.500 50 L130 64.500 L127.300 46.300 Z"/>
<path fill="#dedee6" clip-path="url(#boc)" d="M147 44.500 C134 31 118 26 104 26 C68 26 40 54 40.500 90 C41 126 70 150 104 150 C116 150 126 147 134 142 L124 128 C118 132 112 134.500 104 134.500 C81 134.500 68 114 68 91 C68 66 85 47 108 47 C115 47 120 48 123.500 50 L130 64.500 L127.300 46.300 Z"/>
<circle cx="141.700" cy="109" r="6.500" fill="#b8b8be"/><circle cx="128" cy="118" r="4" fill="#b8b8be"/>
</svg><div class="b" style="left:-3px;top:-2.60px;right:-3px;bottom:-3px;background:linear-gradient(to bottom, rgba(25,25,25,0.36) 0px, rgba(25,25,25,0.36) 3.00px, rgba(25,25,25,0.62) 70.32px, rgba(25,25,25,0.9) 107.35px, rgba(25,25,25,1.0) 127.54px)"></div></div>
<div class="b" style="left:1092.20px;top:344.85px;width:17.90px;height:17.90px;background:#d3efef;border-radius:50%"></div><svg class="i" viewBox="0 0 16 16" style="left:1096.40px;top:349.05px;width:9.50px;height:9.50px;fill:#2aa5a8;stroke:#2aa5a8;stroke-width:0.45"><path d="M14 4.500V14a2 2 0 0 1-2 2H4a2 2 0 0 1-2-2V2a2 2 0 0 1 2-2h5.500L14 4.500zm-3 0A1.500 1.500 0 0 1 9.500 3V1H4a1 1 0 0 0-1 1v12a1 1 0 0 0 1 1h8a1 1 0 0 0 1-1V4.500h-2z"/><path d="M4.500 12.500A.5.500 0 0 1 5 12h3a.5.500 0 0 1 0 1H5a.5.500 0 0 1-.5-.5zm0-2A.5.500 0 0 1 5 10h6a.5.500 0 0 1 0 1H5a.5.500 0 0 1-.5-.5zm1.639-3.708 1.330.886 1.854-1.855a.25.250 0 0 1 .289-.047l1.888.974V8.500a.5.500 0 0 1-.5.500H5a.5.500 0 0 1-.5-.5V8s1.540-1.274 1.639-1.208zM6.250 6a.75.750 0 1 0 0-1.500.75.750 0 0 0 0 1.500z"/></svg><span class="t" style="left:1114.92px;top:348.00px;font-size:12px;font-weight:400;color:#fff;letter-spacing:0.497px;">Newsletter</span><span class="t" style="left:1091.62px;top:411.00px;font-size:13.5px;font-weight:700;color:#fff;letter-spacing:0.461px;">Competitor Newsletter</span><div class="b" style="left:1091.10px;top:427.80px;width:83.60px;height:14.20px;background:#26272c;border-radius:7.10px"></div><svg class="i" viewBox="0 0 16 16" style="left:1092.85px;top:453.85px;width:6.90px;height:6.90px;fill:#f2f2f2;stroke:#f2f2f2;stroke-width:1.6"><rect x="0.6" y="0.6" width="14.8" height="14.8" rx="2.2" fill-opacity=".38" stroke-width="1.6"/><rect x="0.6" y="0.6" width="14.8" height="3.6" rx="1.5" stroke="none"/><path d="M5.600 4v11.500M10.400 4v11.500M0.600 8.200h14.800M0.600 11.800h14.800" stroke-width="1" stroke-opacity=".55" fill="none"/></svg><span class="t" style="left:1103.08px;top:454.00px;font-size:9.5px;font-weight:400;color:#fff;letter-spacing:-0.294px;-webkit-text-stroke:0.180px #fff;">Jul 23, 2024</span><svg class="i" viewBox="0 0 20 14" style="left:1162.90px;top:454.55px;width:8.40px;height:5.90px;fill:#f2f2f2;stroke:#f2f2f2;stroke-width:0.2"><circle cx="10" cy="4" r="3.100"/><path d="M4.200 14c0-3.600 2.500-5.700 5.800-5.700s5.800 2.100 5.800 5.700z"/><circle cx="3.700" cy="4.700" r="2.400"/><circle cx="16.300" cy="4.700" r="2.400"/><path d="M0 12.500c0-2.800 1.500-4.700 3.900-4.700.8 0 1.500.2 2 .6-1.400 1-2.300 2.400-2.500 4.100z"/><path d="M20 12.500c0-2.800-1.500-4.700-3.900-4.700-.8 0-1.500.2-2 .6 1.400 1 2.300 2.400 2.500 4.100z"/></svg><span class="t" style="left:1174.08px;top:454.00px;font-size:9.5px;font-weight:400;color:#fff;letter-spacing:0.000px;-webkit-text-stroke:0.180px #fff;">2</span><svg class="i" viewBox="0 0 16 16" style="left:1191.40px;top:453.30px;width:8.40px;height:8.40px;fill:#f2f2f2;stroke:#f2f2f2;stroke-width:0.55"><path d="M16 8s-3-5.500-8-5.500S0 8 0 8s3 5.500 8 5.500S16 8 16 8zM1.173 8a13.133 13.133 0 0 1 1.660-2.043C4.120 4.668 5.880 3.500 8 3.500c2.120 0 3.879 1.168 5.168 2.457A13.133 13.133 0 0 1 14.828 8c-.58.087-.122.183-.195.288-.335.480-.830 1.120-1.465 1.755C11.879 11.332 10.119 12.500 8 12.500c-2.120 0-3.879-1.168-5.168-2.457A13.134 13.134 0 0 1 1.172 8z"/><path d="M8 5.500a2.500 2.500 0 1 0 0 5 2.500 2.500 0 0 0 0-5zM4.500 8a3.500 3.500 0 1 1 7 0 3.500 3.500 0 0 1-7 0z"/></svg><span class="t" style="left:1202.58px;top:454.00px;font-size:9.5px;font-weight:400;color:#fff;letter-spacing:0.000px;-webkit-text-stroke:0.180px #fff;">2</span><div class="b" style="left:1092.30px;top:474.80px;width:53.80px;height:15.80px;background:#0a2d9f;border-radius:2px"></div><span class="t" style="left:1100.31px;top:479.00px;font-size:7.5px;font-weight:400;color:#fff;letter-spacing:0.489px;-webkit-text-stroke:0.080px #fff;">Subscribe</span>
<div class="b" style="left:673.20px;top:555.70px;width:190.80px;height:168.80px;background:#f4f0ee;border-radius:5.500px;box-shadow:inset 0 0 0 0.800px #f6c585, 3.600px 3.600px 2.400px rgba(0,0,0,.13)"></div>
<div class="b" style="left:685.10px;top:567.75px;width:17.90px;height:17.90px;background:#fee7c6;border-radius:50%"></div><svg class="i" viewBox="0 0 16 16" style="left:689.05px;top:571.70px;width:10.00px;height:10.00px;fill:#f9a440;stroke:#f9a440;stroke-width:0.1"><rect x="0.500" y="1.500" width="15" height="3" stroke="none"/><path d="M0 2a1 1 0 0 1 1-1h14a1 1 0 0 1 1 1v2a1 1 0 0 1-1 1v7.500a2.500 2.500 0 0 1-2.500 2.500h-9A2.500 2.500 0 0 1 1 12.500V5a1 1 0 0 1-1-1V2zm2 3v7.500A1.500 1.500 0 0 0 3.500 14h9a1.500 1.500 0 0 0 1.500-1.500V5H2zm13-3H1v2h14V2zM5 7.500a.5.500 0 0 1 .5-.5h5a.5.500 0 0 1 0 1h-5a.5.500 0 0 1-.5-.5z"/></svg><span class="t" style="left:708.42px;top:572.00px;font-size:12px;font-weight:400;color:#141414;letter-spacing:0.411px;">Topic</span><span class="t" style="left:684.52px;top:633.00px;font-size:13.5px;font-weight:700;color:#111;letter-spacing:0.225px;">0. Strategic Infoo</span><div class="b" style="left:682.90px;top:646.80px;width:84.80px;height:15.30px;background:#ffffff;border-radius:7.65px"></div><svg class="i" viewBox="0 0 16 16" style="left:686.25px;top:676.35px;width:6.90px;height:6.90px;fill:#5c5c5c;stroke:#5c5c5c;stroke-width:1.6"><rect x="0.6" y="0.6" width="14.8" height="14.8" rx="2.2" fill-opacity=".38" stroke-width="1.6"/><rect x="0.6" y="0.6" width="14.8" height="3.6" rx="1.5" stroke="none"/><path d="M5.600 4v11.500M10.400 4v11.500M0.600 8.200h14.800M0.600 11.800h14.800" stroke-width="1" stroke-opacity=".55" fill="none"/></svg><span class="t" style="left:695.88px;top:676.00px;font-size:9.5px;font-weight:400;color:#2b2b2b;letter-spacing:-0.276px;-webkit-text-stroke:0.180px #2b2b2b;">Jul 15, 2025</span><svg class="i" viewBox="0 0 20 14" style="left:756.40px;top:677.05px;width:8.40px;height:5.90px;fill:#5c5c5c;stroke:#5c5c5c;stroke-width:0.2"><circle cx="10" cy="4" r="3.100"/><path d="M4.200 14c0-3.600 2.500-5.700 5.800-5.700s5.800 2.100 5.800 5.700z"/><circle cx="3.700" cy="4.700" r="2.400"/><circle cx="16.300" cy="4.700" r="2.400"/><path d="M0 12.500c0-2.800 1.500-4.700 3.900-4.700.8 0 1.500.2 2 .6-1.400 1-2.300 2.400-2.500 4.100z"/><path d="M20 12.500c0-2.800-1.500-4.700-3.900-4.700-.8 0-1.500.2-2 .6 1.400 1 2.300 2.400 2.500 4.100z"/></svg><span class="t" style="left:767.08px;top:676.00px;font-size:9.5px;font-weight:400;color:#2b2b2b;letter-spacing:0.000px;-webkit-text-stroke:0.180px #2b2b2b;">2</span><svg class="i" viewBox="0 0 16 16" style="left:784.90px;top:675.80px;width:8.40px;height:8.40px;fill:#5c5c5c;stroke:#5c5c5c;stroke-width:0.55"><path d="M16 8s-3-5.500-8-5.500S0 8 0 8s3 5.500 8 5.500S16 8 16 8zM1.173 8a13.133 13.133 0 0 1 1.660-2.043C4.120 4.668 5.880 3.500 8 3.500c2.120 0 3.879 1.168 5.168 2.457A13.133 13.133 0 0 1 14.828 8c-.58.087-.122.183-.195.288-.335.480-.830 1.120-1.465 1.755C11.879 11.332 10.119 12.500 8 12.500c-2.120 0-3.879-1.168-5.168-2.457A13.134 13.134 0 0 1 1.172 8z"/><path d="M8 5.500a2.500 2.500 0 1 0 0 5 2.500 2.500 0 0 0 0-5zM4.500 8a3.500 3.500 0 1 1 7 0 3.500 3.500 0 0 1-7 0z"/></svg><span class="t" style="left:795.98px;top:676.00px;font-size:9.5px;font-weight:400;color:#2b2b2b;letter-spacing:0.000px;-webkit-text-stroke:0.180px #2b2b2b;">19</span><div class="b" style="left:685.20px;top:697.00px;width:53.80px;height:15.80px;background:#0a2d9f;border-radius:2px"></div><span class="t" style="left:693.21px;top:702.00px;font-size:7.5px;font-weight:400;color:#fff;letter-spacing:0.489px;-webkit-text-stroke:0.080px #fff;">Subscribe</span>
<div class="b" style="left:876.75px;top:555.70px;width:190.80px;height:168.80px;background:#edecf7;border-radius:5.500px;box-shadow:inset 0 0 0 0.800px #b5a5e6, 3.600px 3.600px 2.400px rgba(0,0,0,.13)"></div>
<div class="b" style="left:888.65px;top:567.75px;width:17.90px;height:17.90px;background:#d6cee9;border-radius:50%"></div><svg class="i" viewBox="0 0 16 16" style="left:893.10px;top:572.20px;width:9.00px;height:9.00px;fill:#6536c6;stroke:#6536c6;stroke-width:0.45"><path d="M8 16a2 2 0 0 0 2-2H6a2 2 0 0 0 2 2zM8 1.918l-.797.161A4.002 4.002 0 0 0 4 6c0 .628-.134 2.197-.459 3.742-.16.767-.376 1.566-.663 2.258h10.244c-.287-.692-.502-1.490-.663-2.258C12.134 8.197 12 6.628 12 6a4.002 4.002 0 0 0-3.203-3.920L8 1.917zM14.220 12c.223.447.481.801.78 1H1c.299-.199.557-.553.78-1C2.680 10.200 3 6.880 3 6c0-2.420 1.720-4.440 4.005-4.901a1 1 0 1 1 1.990 0A5.002 5.002 0 0 1 13 6c0 .880.320 4.200 1.220 6z"/></svg><span class="t" style="left:911.97px;top:572.00px;font-size:12px;font-weight:400;color:#141414;letter-spacing:0.668px;">Alert</span><span class="t" style="left:888.07px;top:633.00px;font-size:13.5px;font-weight:700;color:#111;letter-spacing:0.119px;">Serac Weekly Briefing</span><div class="b" style="left:882.05px;top:646.80px;width:84.50px;height:15.30px;background:#ffffff;border-radius:7.65px"></div><svg class="i" viewBox="0 0 16 16" style="left:890.10px;top:676.35px;width:6.90px;height:6.90px;fill:#5c5c5c;stroke:#5c5c5c;stroke-width:1.6"><rect x="0.6" y="0.6" width="14.8" height="14.8" rx="2.2" fill-opacity=".38" stroke-width="1.6"/><rect x="0.6" y="0.6" width="14.8" height="3.6" rx="1.5" stroke="none"/><path d="M5.600 4v11.500M10.400 4v11.500M0.600 8.200h14.800M0.600 11.800h14.800" stroke-width="1" stroke-opacity=".55" fill="none"/></svg><span class="t" style="left:900.03px;top:676.00px;font-size:9.5px;font-weight:400;color:#2b2b2b;letter-spacing:-0.263px;-webkit-text-stroke:0.180px #2b2b2b;">Sep 29, 2025</span><svg class="i" viewBox="0 0 20 14" style="left:965.15px;top:677.05px;width:8.40px;height:5.90px;fill:#5c5c5c;stroke:#5c5c5c;stroke-width:0.2"><circle cx="10" cy="4" r="3.100"/><path d="M4.200 14c0-3.600 2.500-5.700 5.800-5.700s5.800 2.100 5.800 5.700z"/><circle cx="3.700" cy="4.700" r="2.400"/><circle cx="16.300" cy="4.700" r="2.400"/><path d="M0 12.500c0-2.800 1.500-4.700 3.900-4.700.8 0 1.500.2 2 .6-1.400 1-2.300 2.400-2.500 4.100z"/><path d="M20 12.500c0-2.800-1.500-4.700-3.900-4.700-.8 0-1.500.2-2 .6 1.400 1 2.300 2.400 2.500 4.100z"/></svg><span class="t" style="left:976.03px;top:676.00px;font-size:9.5px;font-weight:400;color:#2b2b2b;letter-spacing:0.000px;-webkit-text-stroke:0.180px #2b2b2b;">2</span><svg class="i" viewBox="0 0 16 16" style="left:993.25px;top:675.80px;width:8.40px;height:8.40px;fill:#5c5c5c;stroke:#5c5c5c;stroke-width:0.55"><path d="M16 8s-3-5.500-8-5.500S0 8 0 8s3 5.500 8 5.500S16 8 16 8zM1.173 8a13.133 13.133 0 0 1 1.660-2.043C4.120 4.668 5.880 3.500 8 3.500c2.120 0 3.879 1.168 5.168 2.457A13.133 13.133 0 0 1 14.828 8c-.58.087-.122.183-.195.288-.335.480-.830 1.120-1.465 1.755C11.879 11.332 10.119 12.500 8 12.500c-2.120 0-3.879-1.168-5.168-2.457A13.134 13.134 0 0 1 1.172 8z"/><path d="M8 5.500a2.500 2.500 0 1 0 0 5 2.500 2.500 0 0 0 0-5zM4.500 8a3.500 3.500 0 1 1 7 0 3.500 3.500 0 0 1-7 0z"/></svg><span class="t" style="left:1004.23px;top:676.00px;font-size:9.5px;font-weight:400;color:#2b2b2b;letter-spacing:0.000px;-webkit-text-stroke:0.180px #2b2b2b;">--</span><div class="b" style="left:888.75px;top:697.00px;width:53.80px;height:15.80px;background:#0a2d9f;border-radius:2px"></div><span class="t" style="left:896.76px;top:702.00px;font-size:7.5px;font-weight:400;color:#fff;letter-spacing:0.489px;-webkit-text-stroke:0.080px #fff;">Subscribe</span>
<div class="b" style="left:1080.30px;top:555.70px;width:190.80px;height:168.80px;background:#edecf7;border-radius:5.500px;box-shadow:inset 0 0 0 0.800px #b5a5e6, 3.600px 3.600px 2.400px rgba(0,0,0,.13)"></div>
<div class="b" style="left:1092.20px;top:567.75px;width:17.90px;height:17.90px;background:#d6cee9;border-radius:50%"></div><svg class="i" viewBox="0 0 16 16" style="left:1096.65px;top:572.20px;width:9.00px;height:9.00px;fill:#6536c6;stroke:#6536c6;stroke-width:0.45"><path d="M8 16a2 2 0 0 0 2-2H6a2 2 0 0 0 2 2zM8 1.918l-.797.161A4.002 4.002 0 0 0 4 6c0 .628-.134 2.197-.459 3.742-.16.767-.376 1.566-.663 2.258h10.244c-.287-.692-.502-1.490-.663-2.258C12.134 8.197 12 6.628 12 6a4.002 4.002 0 0 0-3.203-3.920L8 1.917zM14.220 12c.223.447.481.801.78 1H1c.299-.199.557-.553.78-1C2.680 10.200 3 6.880 3 6c0-2.420 1.720-4.440 4.005-4.901a1 1 0 1 1 1.990 0A5.002 5.002 0 0 1 13 6c0 .880.320 4.200 1.220 6z"/></svg><span class="t" style="left:1115.52px;top:572.00px;font-size:12px;font-weight:400;color:#141414;letter-spacing:0.668px;">Alert</span><span class="t" style="left:1091.62px;top:616.00px;font-size:13.5px;font-weight:700;color:#111;letter-spacing:-0.010px;">Energy Daily - Solar</span><span class="t" style="left:1091.62px;top:633.00px;font-size:13.5px;font-weight:700;color:#111;letter-spacing:0.556px;">Innovation</span><div class="b" style="left:1091.20px;top:647.40px;width:66.50px;height:14.50px;background:#ffffff;border-radius:7.25px"></div><svg class="i" viewBox="0 0 16 16" style="left:1093.35px;top:676.35px;width:6.90px;height:6.90px;fill:#5c5c5c;stroke:#5c5c5c;stroke-width:1.6"><rect x="0.6" y="0.6" width="14.8" height="14.8" rx="2.2" fill-opacity=".38" stroke-width="1.6"/><rect x="0.6" y="0.6" width="14.8" height="3.6" rx="1.5" stroke="none"/><path d="M5.600 4v11.500M10.400 4v11.500M0.600 8.200h14.800M0.600 11.800h14.800" stroke-width="1" stroke-opacity=".55" fill="none"/></svg><span class="t" style="left:1103.28px;top:676.00px;font-size:9.5px;font-weight:400;color:#2b2b2b;letter-spacing:-0.312px;-webkit-text-stroke:0.180px #2b2b2b;">Sep 2, 2025</span><svg class="i" viewBox="0 0 20 14" style="left:1162.90px;top:677.05px;width:8.40px;height:5.90px;fill:#5c5c5c;stroke:#5c5c5c;stroke-width:0.2"><circle cx="10" cy="4" r="3.100"/><path d="M4.200 14c0-3.600 2.500-5.700 5.800-5.700s5.800 2.100 5.800 5.700z"/><circle cx="3.700" cy="4.700" r="2.400"/><circle cx="16.300" cy="4.700" r="2.400"/><path d="M0 12.500c0-2.800 1.500-4.700 3.900-4.700.8 0 1.500.2 2 .6-1.400 1-2.300 2.400-2.500 4.100z"/><path d="M20 12.500c0-2.800-1.500-4.700-3.900-4.700-.8 0-1.500.2-2 .6 1.400 1 2.300 2.400 2.500 4.100z"/></svg><span class="t" style="left:1173.78px;top:676.00px;font-size:9.5px;font-weight:400;color:#2b2b2b;letter-spacing:0.000px;-webkit-text-stroke:0.180px #2b2b2b;">3</span><svg class="i" viewBox="0 0 16 16" style="left:1191.30px;top:675.80px;width:8.40px;height:8.40px;fill:#5c5c5c;stroke:#5c5c5c;stroke-width:0.55"><path d="M16 8s-3-5.500-8-5.500S0 8 0 8s3 5.500 8 5.500S16 8 16 8zM1.173 8a13.133 13.133 0 0 1 1.660-2.043C4.120 4.668 5.880 3.500 8 3.500c2.120 0 3.879 1.168 5.168 2.457A13.133 13.133 0 0 1 14.828 8c-.58.087-.122.183-.195.288-.335.480-.830 1.120-1.465 1.755C11.879 11.332 10.119 12.500 8 12.500c-2.120 0-3.879-1.168-5.168-2.457A13.134 13.134 0 0 1 1.172 8z"/><path d="M8 5.500a2.500 2.500 0 1 0 0 5 2.500 2.500 0 0 0 0-5zM4.500 8a3.500 3.500 0 1 1 7 0 3.500 3.500 0 0 1-7 0z"/></svg><span class="t" style="left:1202.48px;top:676.00px;font-size:9.5px;font-weight:400;color:#2b2b2b;letter-spacing:0.000px;-webkit-text-stroke:0.180px #2b2b2b;">--</span><div class="b" style="left:1092.30px;top:697.00px;width:53.80px;height:15.80px;background:#0a2d9f;border-radius:2px"></div><span class="t" style="left:1100.31px;top:702.00px;font-size:7.5px;font-weight:400;color:#fff;letter-spacing:0.489px;-webkit-text-stroke:0.080px #fff;">Subscribe</span></div></div></body></html>
